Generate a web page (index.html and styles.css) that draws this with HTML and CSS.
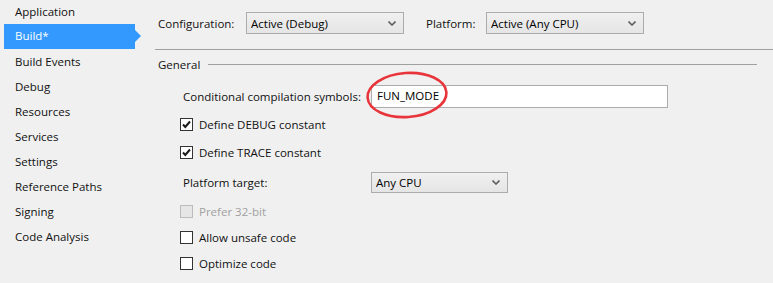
FILE: index.html
```html
<!DOCTYPE html>
<html>
<head>
<meta charset="utf-8">
<link rel="stylesheet" href="styles.css">
</head>
<body>
<div class="page">
  <nav class="sidebar">
    <div class="nav-item">Application</div>
    <div class="nav-item active">Build*</div>
    <div class="nav-item">Build Events</div>
    <div class="nav-item">Debug</div>
    <div class="nav-item">Resources</div>
    <div class="nav-item">Services</div>
    <div class="nav-item">Settings</div>
    <div class="nav-item">Reference Paths</div>
    <div class="nav-item">Signing</div>
    <div class="nav-item">Code Analysis</div>
  </nav>
  <main class="main">
    <div class="toprow">
      <span class="lbl-config">Configuration:</span>
      <div class="select sel-config"><span>Active (Debug)</span><svg class="chev" width="8" height="5" viewBox="0 0 8 5"><path d="M0.5 0.5 L4 4 L7.5 0.5" fill="none" stroke="#606060" stroke-width="1.6"/></svg></div>
      <span class="lbl-platform">Platform:</span>
      <div class="select sel-platform"><span>Active (Any CPU)</span><svg class="chev" width="8" height="5" viewBox="0 0 8 5"><path d="M0.5 0.5 L4 4 L7.5 0.5" fill="none" stroke="#606060" stroke-width="1.6"/></svg></div>
    </div>
    <div class="rule"></div>
    <div class="group-head"><span>General</span><div class="group-line"></div></div>
    <div class="form">
      <div class="row row-symbols">
        <span class="flabel">Conditional compilation symbols:</span>
        <div class="textbox">FUN_MODE</div>
        <svg class="annot" width="90" height="54" viewBox="0 0 90 54"><ellipse cx="45" cy="27" rx="39.5" ry="22" transform="rotate(-4 45 27)" fill="none" stroke="#e8353b" stroke-width="2.6"/></svg>
      </div>
      <div class="row check r-debug"><span class="box"><svg width="11" height="11" viewBox="0 0 11 11"><path d="M2 5.5 L4.3 8 L9 2.5" fill="none" stroke="#1a1a1a" stroke-width="2"/></svg></span><span>Define DEBUG constant</span></div>
      <div class="row check r-trace"><span class="box"><svg width="11" height="11" viewBox="0 0 11 11"><path d="M2 5.5 L4.3 8 L9 2.5" fill="none" stroke="#1a1a1a" stroke-width="2"/></svg></span><span>Define TRACE constant</span></div>
      <div class="row r-target">
        <span class="flabel">Platform target:</span>
        <div class="select sel-target"><span>Any CPU</span><svg class="chev" width="8" height="5" viewBox="0 0 8 5"><path d="M0.5 0.5 L4 4 L7.5 0.5" fill="none" stroke="#606060" stroke-width="1.6"/></svg></div>
      </div>
      <div class="row check disabled r-prefer"><span class="box"></span><span>Prefer 32-bit</span></div>
      <div class="row check r-unsafe"><span class="box"></span><span>Allow unsafe code</span></div>
      <div class="row check r-opt"><span class="box"></span><span>Optimize code</span></div>
    </div>
  </main>
</div>
</body>
</html>
```
FILE: styles.css
```css
html, body {
  margin: 0;
  padding: 0;
  background: #f0f0f0;
  font-family: "Open Sans", "Noto Sans", sans-serif;
  font-size: 11.5px;
  color: #111111;
  width: 773px;
  height: 283px;
  overflow: hidden;
}
.page {
  display: flex;
  height: 283px;
}
.sidebar {
  width: 140px;
  flex: none;
  padding-top: 0;
}
.nav-item {
  height: 25px;
  line-height: 24px;
  padding-left: 15px;
  position: relative;
  white-space: nowrap;
}
.nav-item.active {
  background: #3399ff;
  color: #ffffff;
  margin-left: 4px;
  margin-right: 5px;
  padding-left: 11px;
  margin-top: -1px;
  margin-bottom: 1px;
}
.nav-item.active::after {
  content: "";
  position: absolute;
  right: -6px;
  top: 6px;
  border-left: 6px solid #3399ff;
  border-top: 6px solid transparent;
  border-bottom: 6px solid transparent;
}
.main {
  flex: 1;
  padding-left: 15px;
  display: flex;
  flex-direction: column;
}
.toprow {
  display: flex;
  align-items: center;
  margin-top: 12px;
  height: 22px;
  padding-left: 3px;
}
.lbl-config { width: 88px; }
.lbl-platform { width: 60px; margin-left: 22px; }
.select {
  box-sizing: border-box;
  height: 22px;
  border: 1px solid #acacac;
  background: linear-gradient(#f0f0f0, #e5e5e5);
  display: flex;
  align-items: center;
  justify-content: space-between;
  padding: 0 7px 0 4px;
  color: #000;
}
.sel-config { width: 158px; }
.sel-platform { width: 158px; }
.rule {
  margin-top: 15px;
  height: 1px;
  background: #a0a0a0;
}
.group-head {
  display: flex;
  align-items: center;
  height: 16px;
  margin-top: 6px;
  padding-left: 3px;
  padding-right: 16px;
}
.group-line {
  flex: 1;
  height: 1px;
  background: #a0a0a0;
  margin-left: 8px;
}
.form {
  display: flex;
  flex-direction: column;
  padding-left: 25px;
}
.row {
  display: flex;
  align-items: center;
  position: relative;
}
.flabel {
  width: 191px;
  padding-left: 3px;
  box-sizing: border-box;
}
.row-symbols { margin-top: 13px; height: 22px; }
.textbox {
  box-sizing: border-box;
  width: 297px;
  height: 23px;
  border: 1px solid #acacac;
  background: #ffffff;
  padding-left: 5px;
  line-height: 20px;
  color: #000;
}
.annot {
  position: absolute;
  left: 182px;
  top: -17px;
}
.check { height: 13px; }
.box {
  box-sizing: border-box;
  width: 13px;
  height: 13px;
  border: 1px solid #333333;
  background: #ffffff;
  margin-right: 6px;
  display: flex;
  align-items: center;
  justify-content: center;
}
.disabled { color: #a0a0a0; }
.disabled .box { border-color: #bcbcbc; background: #e6e6e6; }
.r-debug { margin-top: 11px; }
.r-trace { margin-top: 15px; }
.r-target { margin-top: 13px; height: 21px; }
.sel-target { width: 137px; height: 21px; }
.r-prefer { margin-top: 12px; }
.r-unsafe { margin-top: 13px; }
.r-opt { margin-top: 13px; }
```
